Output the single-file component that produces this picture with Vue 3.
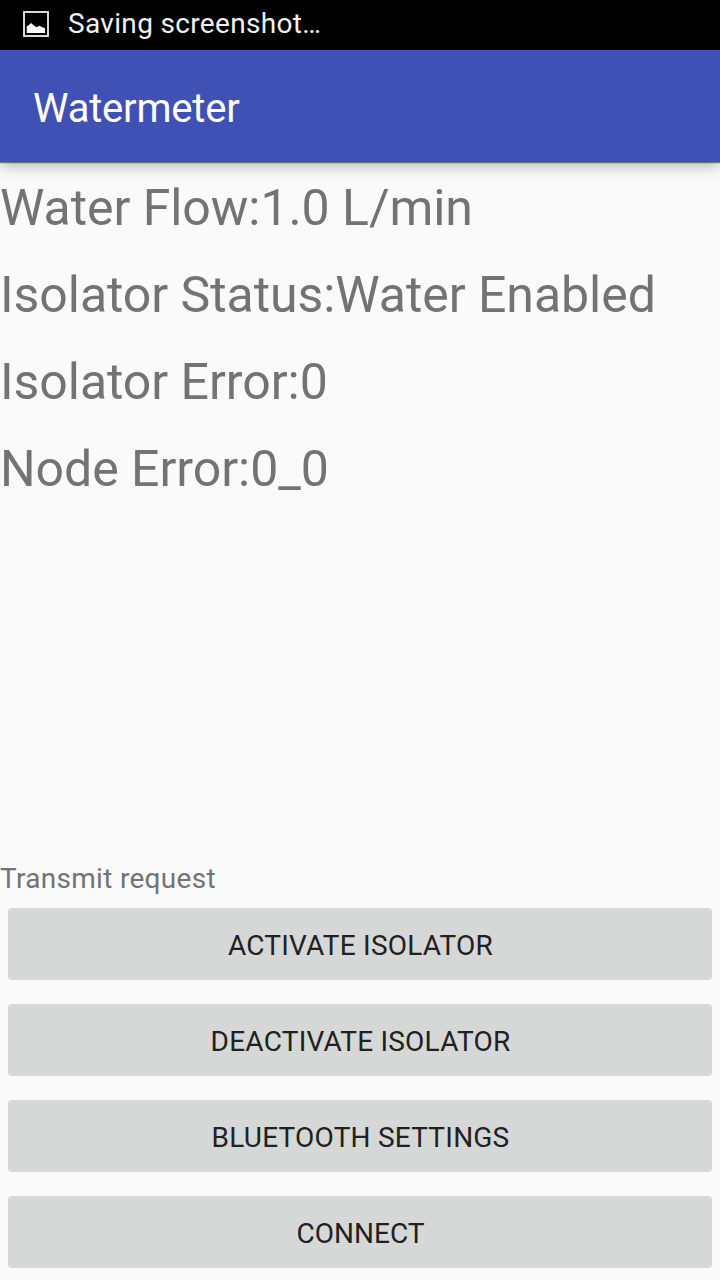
<script setup>
import { ref } from 'vue';

const readings = ref([
  { label: 'Water Flow:', value: '1.0 L/min' },
  { label: 'Isolator Status:', value: 'Water Enabled' },
  { label: 'Isolator Error:', value: '0' },
  { label: 'Node Error:', value: '0_0' },
]);

const actions = ['Activate isolator', 'Deactivate isolator', 'Bluetooth settings', 'Connect'];
</script>

<template>
  <div class="screen">
    <div class="status-bar">
      <svg class="status-icon" width="26" height="26" viewBox="0 0 26 26">
        <rect x="1" y="1" width="24" height="24" fill="none" stroke="#f0f0f0" stroke-width="1.8" />
        <path d="M3.700 22v-6.500L6 14l2-2 4.500 3.800 1.500.2 2.500-1.200 2.500 1.200 3 1.200V22z" fill="#fff" />
      </svg>
      <span class="status-text">Saving screenshot…</span>
    </div>
    <header class="app-bar">
      <h1 class="title">Watermeter</h1>
    </header>
    <main class="readings">
      <p v-for="item in readings" :key="item.label" class="reading">{{ item.label }}{{ item.value }}</p>
    </main>
    <footer class="controls">
      <p class="caption">Transmit request</p>
      <button v-for="action in actions" :key="action" class="action-btn">{{ action }}</button>
    </footer>
  </div>
</template>

<style>
body {
  margin: 0;
}
</style>

<style scoped>
.screen {
  display: flex;
  flex-direction: column;
  width: 720px;
  height: 1280px;
  overflow: hidden;
  background-color: #fafafa;
  font-family: Roboto, sans-serif;
}

.status-bar {
  display: flex;
  align-items: center;
  height: 50px;
  padding-left: 23px;
  box-sizing: border-box;
  background-color: #000;
  color: #f0f0f0;
}

.status-icon {
  margin-bottom: 2px;
}

.status-text {
  margin-left: 19px;
  padding-bottom: 3px;
  font-size: 28px;
  letter-spacing: 0.33px;
}

.app-bar {
  display: flex;
  align-items: center;
  height: 112px;
  padding: 4px 33px 0;
  box-sizing: border-box;
  background-color: #3f51b5;
  box-shadow: 0 1px 1px rgba(0, 0, 0, 0.45), 0 4px 14px rgba(0, 0, 0, 0.28);
}

.title {
  margin: 0;
  color: #fff;
  font-size: 40px;
  font-weight: 400;
  letter-spacing: -0.2px;
}

.readings {
  display: flex;
  flex: 1;
  flex-direction: column;
  gap: 20px;
  padding-top: 13px;
}

.reading {
  margin: 0;
  color: #737373;
  font-size: 50px;
  letter-spacing: -0.05px;
  line-height: 67px;
  white-space: nowrap;
}

.controls {
  display: flex;
  flex-direction: column;
  gap: 24px;
  padding: 0 8px 12px;
}

.caption {
  margin: 0 -8px -14px;
  color: #737373;
  font-size: 28px;
  letter-spacing: 0.3px;
  line-height: 38px;
}

.action-btn {
  height: 72px;
  padding: 2px 0 0 1px;
  border: none;
  border-radius: 4px;
  background-color: #d6d7d7;
  color: #212121;
  font-family: inherit;
  font-size: 28px;
  letter-spacing: 0.22px;
  text-transform: uppercase;
}

.action-btn:last-child {
  letter-spacing: 0;
}
</style>
